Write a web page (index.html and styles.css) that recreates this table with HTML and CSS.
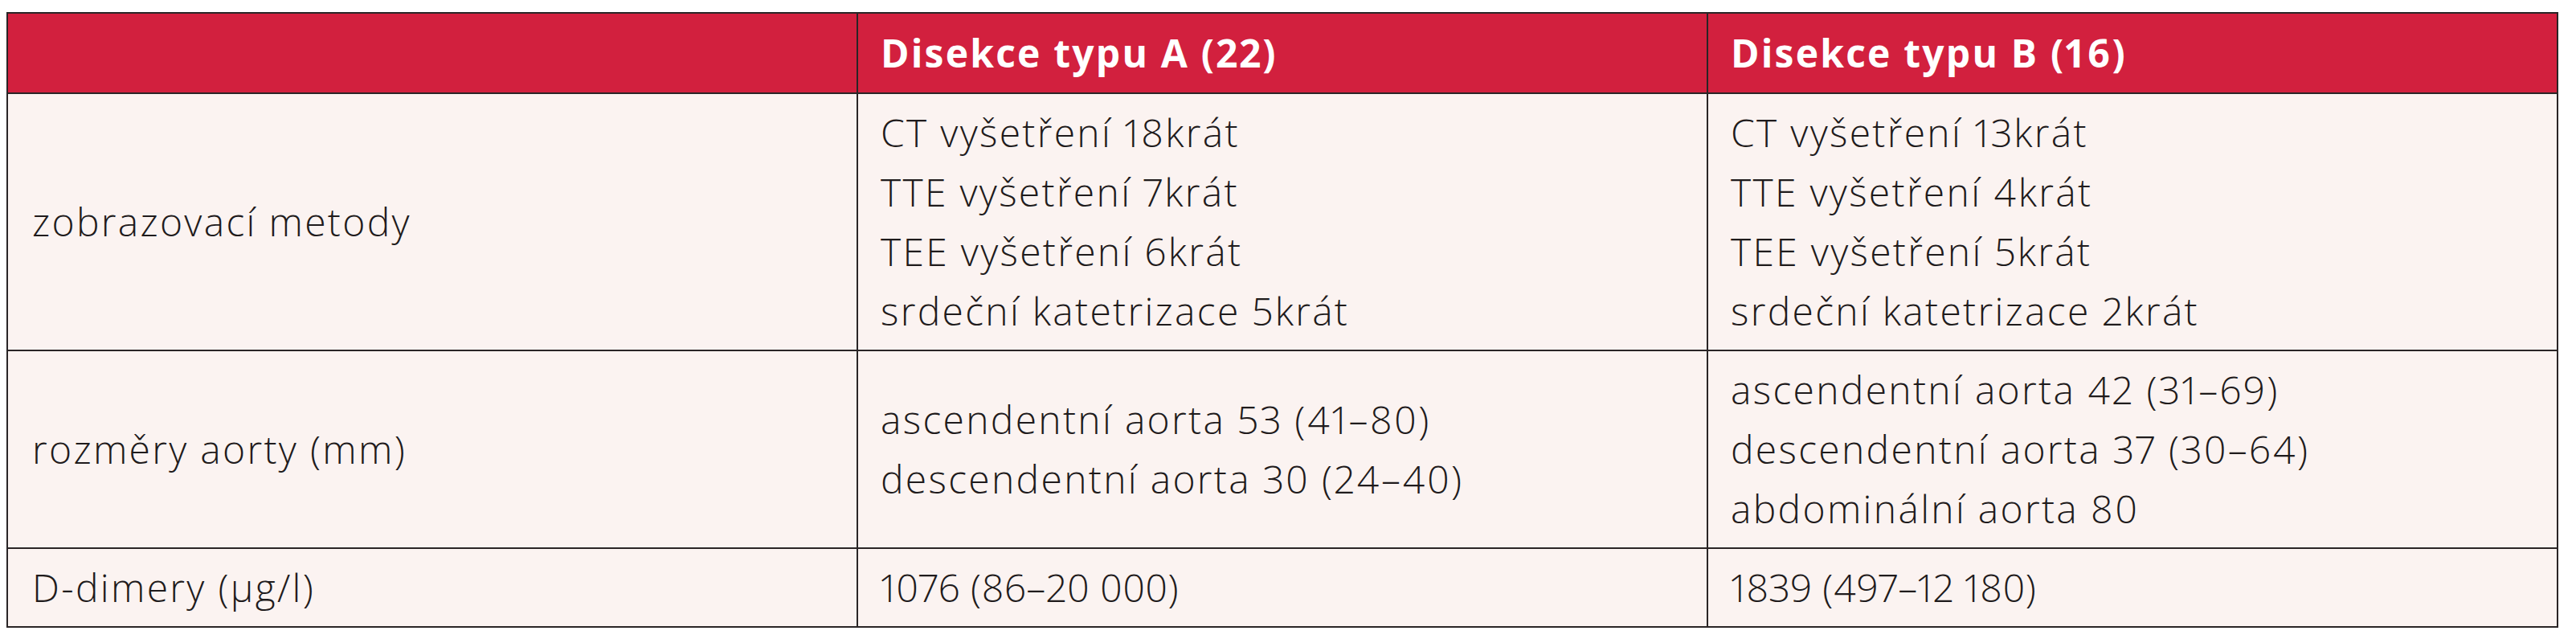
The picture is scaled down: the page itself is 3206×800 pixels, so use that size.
FILE: index.html
```html
<!DOCTYPE html>
<html lang="cs">
<head>
<meta charset="utf-8">
<title>Disekce aorty</title>
<link rel="stylesheet" href="styles.css">
</head>
<body>
<div class="wrap">
<table class="data">
  <colgroup><col class="c"><col class="c"><col class="c"></colgroup>
  <thead>
    <tr>
      <th></th>
      <th>Disekce typu A (22)</th>
      <th>Disekce typu B (16)</th>
    </tr>
  </thead>
  <tbody>
    <tr>
      <td class="label">zobrazovací metody</td>
      <td>
        <div class="ln">CT vyšetření 18krát</div>
        <div class="ln">TTE vyšetření 7krát</div>
        <div class="ln">TEE vyšetření 6krát</div>
        <div class="ln">srdeční katetrizace 5krát</div>
      </td>
      <td>
        <div class="ln">CT vyšetření 13krát</div>
        <div class="ln">TTE vyšetření 4krát</div>
        <div class="ln">TEE vyšetření 5krát</div>
        <div class="ln">srdeční katetrizace 2krát</div>
      </td>
    </tr>
    <tr>
      <td class="label">rozměry aorty (mm)</td>
      <td>
        <div class="ln">ascendentní aorta 53 (41–80)</div>
        <div class="ln">descendentní aorta 30 (24–40)</div>
      </td>
      <td>
        <div class="ln">ascendentní aorta 42 (31–69)</div>
        <div class="ln">descendentní aorta 37 (30–64)</div>
        <div class="ln">abdominální aorta 80</div>
      </td>
    </tr>
    <tr>
      <td class="label">D-dimery (μg/l)</td>
      <td class="num">1076 (86–20 000)</td>
      <td class="num">1839 (497–12 180)</td>
    </tr>
  </tbody>
</table>
</div>
</body>
</html>
```
FILE: styles.css
```css
html, body {
  margin: 0;
  padding: 0;
  background: #ffffff;
}

.wrap {
  padding: 15px 0 0 8px;
}

.data {
  width: 3176px;
  table-layout: fixed;
  border-collapse: separate;
  border-spacing: 0;
  border-left: 2px solid #2a2526;
  border-top: 2px solid #2a2526;
  font-family: "Open Sans", "Noto Sans", "DejaVu Sans", sans-serif;
  color: #1f1b1c;
  font-variant-numeric: proportional-nums;
}

.data th,
.data td {
  border-right: 2px solid #2a2526;
  border-bottom: 2px solid #2a2526;
  text-align: left;
  vertical-align: middle;
  padding: 11px 20px 11px 28px;
  line-height: 74px;
}

.data th {
  background: #d2203e;
  color: #ffffff;
  font-weight: 700;
  font-size: 48px;
  letter-spacing: 2.2px;
  padding-top: 12px;
  padding-bottom: 12px;
}

.data td {
  background: #fbf3f1;
  font-weight: 300;
  font-size: 48px;
  letter-spacing: 2.3px;
  white-space: nowrap;
}

.data td.label {
  padding-left: 30px;
}

.data td.num {
  letter-spacing: 0.4px;
}

.ln {
  display: block;
}
```
